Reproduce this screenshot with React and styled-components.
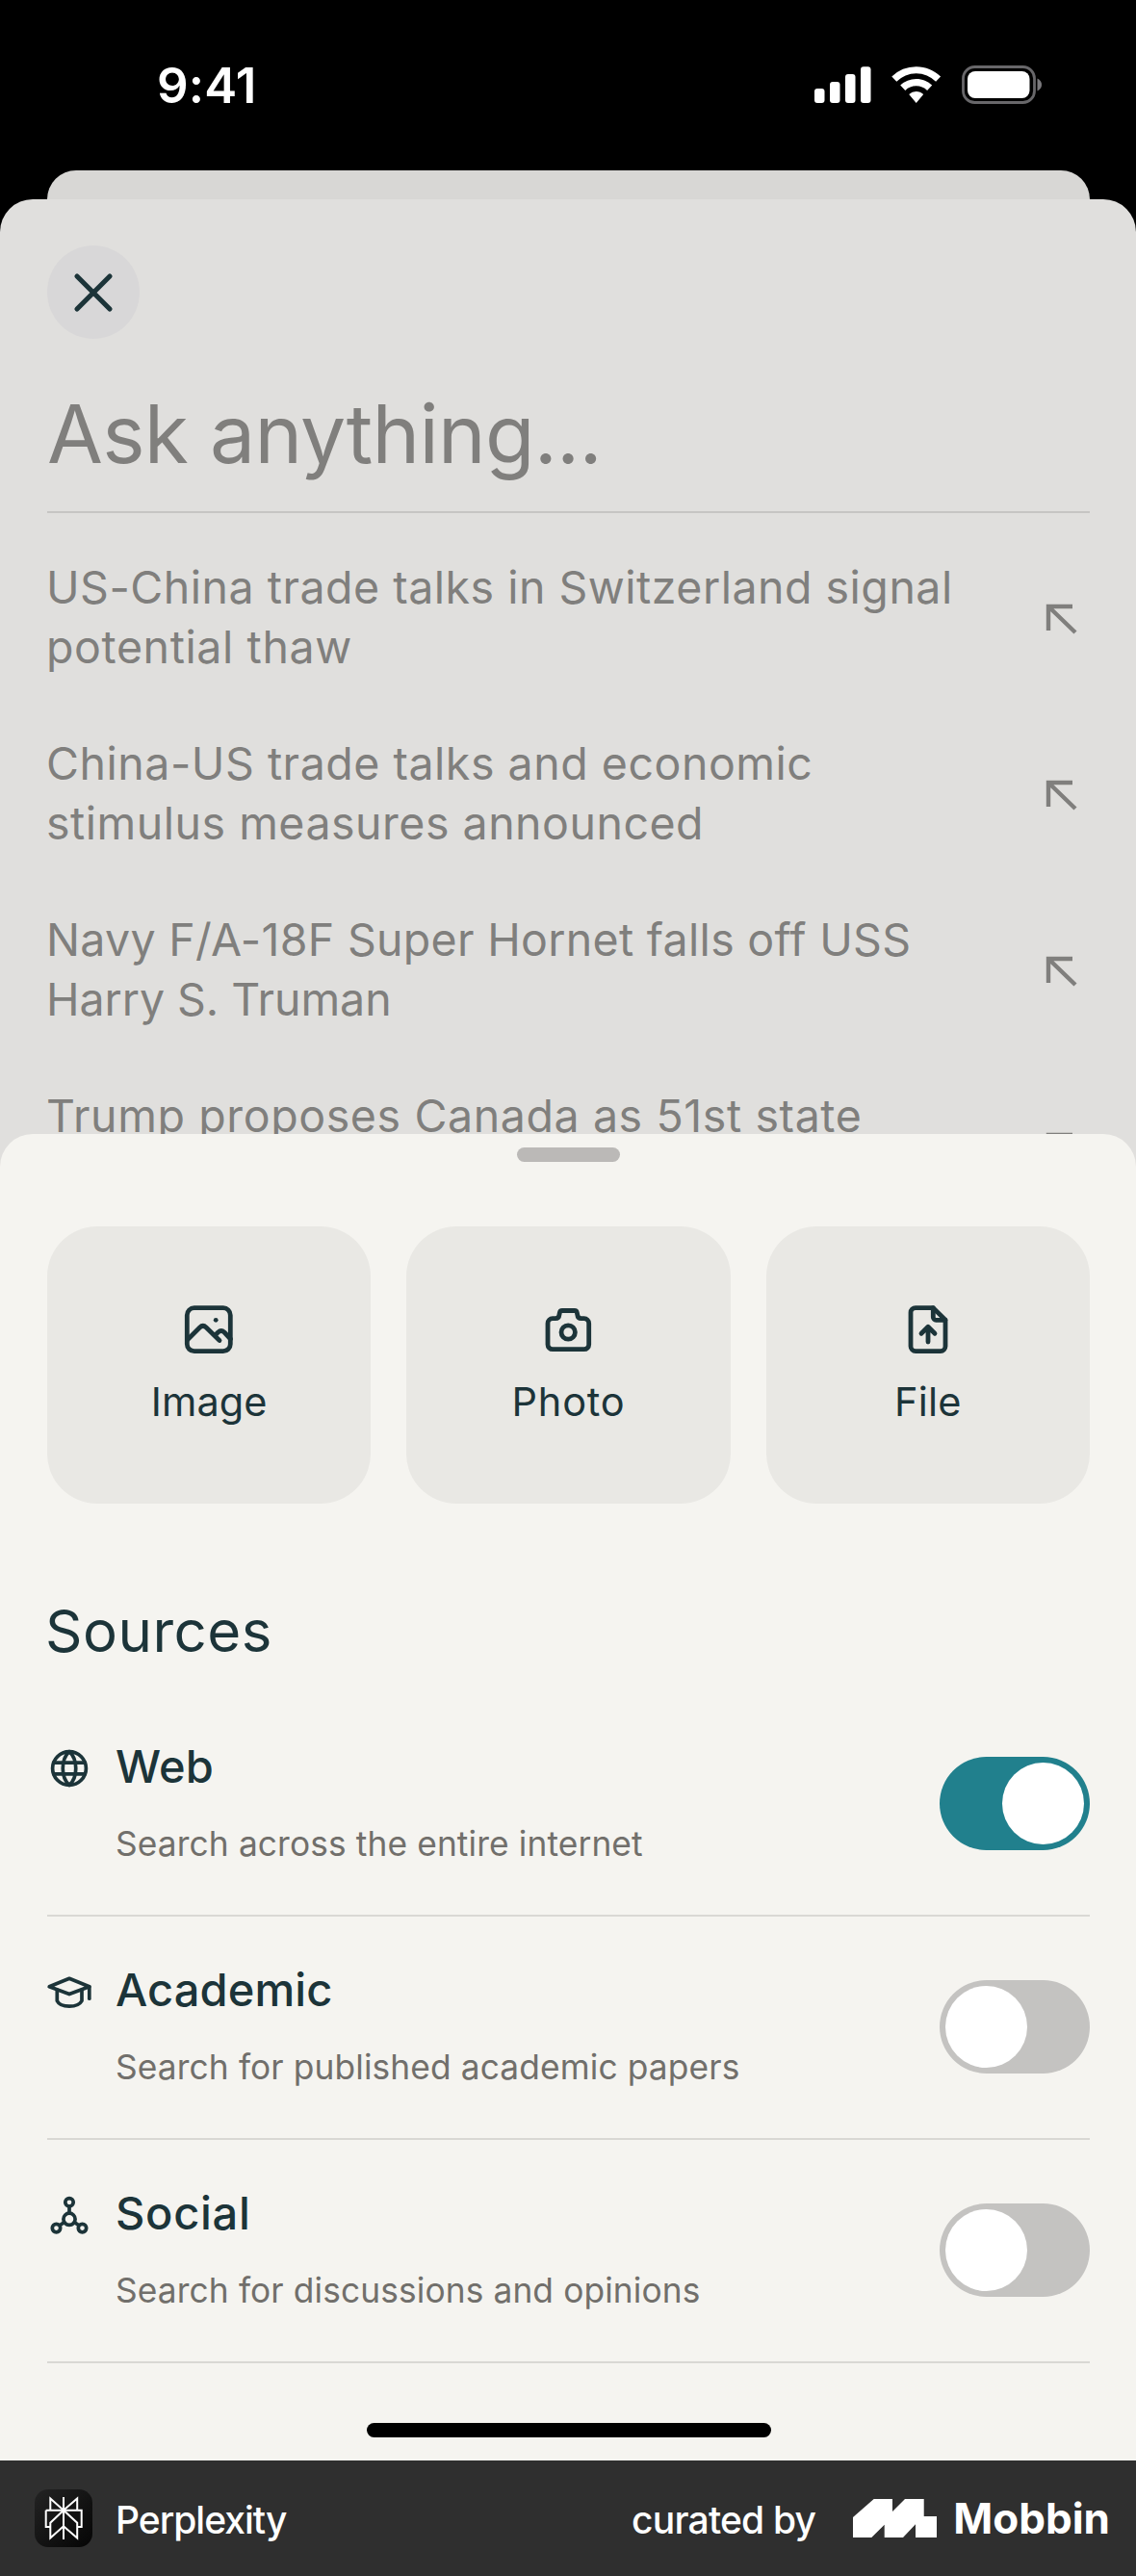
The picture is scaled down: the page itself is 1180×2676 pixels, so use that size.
import React, { useState } from "react";
import styled, { createGlobalStyle } from "styled-components";

const color = {
  ink: "#1c3439",
  paper: "#f5f4f0",
  dimmed: "#e0dfdd",
  dimmedText: "#807f7d",
  muted: "#716f6b",
  teal: "#21808d",
};

const GlobalStyle = createGlobalStyle`
  *, *::before, *::after { box-sizing: border-box; }
  body {
    margin: 0;
    background: #000;
    font-family: Inter, "Liberation Sans", sans-serif;
    -webkit-font-smoothing: antialiased;
  }
  button { font: inherit; border: 0; padding: 0; }
  h1, h2, h3, p, ul { margin: 0; padding: 0; font-weight: 400; }
`;

const Screen = styled.div`
  display: flex;
  flex-direction: column;
  width: 1180px;
  height: 2676px;
  background: #000;
  overflow: hidden;
`;

const StatusBar = styled.header`
  flex: none;
  display: flex;
  justify-content: space-between;
  height: 177px;
  padding: 58px 98px 0 163px;
`;

const Time = styled.span`
  color: #fff;
  font-size: 51px;
  line-height: 62px;
  font-weight: 600;
  letter-spacing: 0.2px;
`;

const StatusIcon = styled.svg`
  display: block;
  width: 238px;
  height: 44px;
  margin-top: 8px;
`;

const BackSheet = styled.div`
  flex: none;
  height: 30px;
  margin: 0 48px 0 49px;
  border-radius: 30px 30px 0 0;
  background: #d8d7d5;
`;

const AskSheet = styled.main`
  flex: none;
  display: flex;
  flex-direction: column;
  align-items: stretch;
  height: 1031px;
  padding: 48px 48px 0 49px;
  border-radius: 34px 34px 0 0;
  background: ${color.dimmed};
  overflow: hidden;
`;

const CloseButton = styled.button`
  flex: none;
  display: grid;
  place-items: center;
  width: 96px;
  height: 97px;
  border-radius: 50%;
  background: #d8d7d8;
  svg { display: block; }
`;

const Prompt = styled.h1`
  flex: none;
  margin-top: 49px;
  height: 132px;
  border-bottom: 2px solid #c6c5c3;
  color: ${color.dimmedText};
  font-size: 84px;
  line-height: 100px;
  letter-spacing: -0.75px;
  white-space: nowrap;
`;

const SuggestionList = styled.ul`
  flex: none;
  display: flex;
  flex-direction: column;
  gap: 59px;
  padding-top: 46px;
  list-style: none;
`;

const Suggestion = styled.li`
  display: flex;
  align-items: center;
  justify-content: space-between;
  height: 124px;
  padding-right: 12px;
  color: ${color.dimmedText};
  svg { margin-top: 3px; }
`;

const SuggestionText = styled.div`
  align-self: flex-start;
  margin-left: -1px;
`;

const SuggestionLine = styled.span`
  display: block;
  font-size: 46.5px;
  line-height: 62px;
  letter-spacing: ${(p) => p.$tracking}px;
  white-space: nowrap;
`;

const BottomSheet = styled.section`
  position: relative;
  flex: none;
  display: flex;
  flex-direction: column;
  height: 1378px;
  margin-top: -60px;
  padding: 14px 48px 0 49px;
  border-radius: 34px 34px 0 0;
  background: ${color.paper};
`;

const Handle = styled.div`
  flex: none;
  align-self: center;
  width: 107px;
  height: 15px;
  border-radius: 8px;
  background: #bbb9b7;
`;

const CardRow = styled.div`
  flex: none;
  display: grid;
  grid-template-columns: repeat(3, 1fr);
  gap: 37px;
  margin-top: 67px;
`;

const Card = styled.button`
  display: flex;
  flex-direction: column;
  align-items: center;
  gap: 22px;
  height: 288px;
  padding-top: 79px;
  border-radius: 52px;
  background: #e9e8e4;
  color: ${color.ink};
`;

const CardIcon = styled.svg`
  display: block;
  width: 56px;
  height: 56px;
  fill: none;
  stroke: currentColor;
  stroke-width: 4.8;
  stroke-linecap: round;
  stroke-linejoin: round;
`;

const CardLabel = styled.span`
  font-size: 41.5px;
  line-height: 50px;
  letter-spacing: ${(p) => p.$tracking}px;
`;

const SectionTitle = styled.h2`
  flex: none;
  margin-top: 97px;
  margin-left: -2px;
  color: ${color.ink};
  font-size: 60px;
  line-height: 70px;
  letter-spacing: 0.5px;
`;

const SourceList = styled.ul`
  flex: none;
  display: flex;
  flex-direction: column;
  margin-top: 30px;
  list-style: none;
`;

const SourceRow = styled.li`
  display: flex;
  align-items: flex-start;
  height: 232px;
  border-bottom: 2px solid #d9d8d4;
`;

const SourceIcon = styled.svg`
  flex: none;
  display: block;
  width: 48px;
  height: 48px;
  margin-top: 54px;
  margin-left: -1px;
  fill: none;
  stroke: ${color.ink};
  stroke-width: 3.7;
  stroke-linecap: round;
  stroke-linejoin: round;
`;

const SourceText = styled.div`
  flex: 1;
  display: flex;
  flex-direction: column;
  gap: 31px;
  padding: 48px 0 0 24px;
`;

const SourceName = styled.h3`
  color: ${color.ink};
  font-size: 47px;
  line-height: 56px;
  font-weight: 550;
  letter-spacing: ${(p) => p.$tracking}px;
`;

const SourceHint = styled.p`
  color: ${color.muted};
  font-size: 35.3px;
  line-height: 44px;
  letter-spacing: 0.12px;
`;

const Toggle = styled.button`
  flex: none;
  display: flex;
  align-items: center;
  justify-content: ${(p) => (p.$on ? "flex-end" : "flex-start")};
  width: 156px;
  height: 97px;
  margin-top: 66px;
  padding: 0 6px;
  border-radius: 49px;
  background: ${(p) => (p.$on ? color.teal : "#c4c3c1")};
`;

const Knob = styled.span`
  width: 85px;
  height: 85px;
  border-radius: 50%;
  background: #fff;
`;

const HomeIndicator = styled.div`
  flex: none;
  align-self: center;
  width: 420px;
  height: 15px;
  margin-top: 62px;
  border-radius: 8px;
  background: #000;
`;

const Footer = styled.footer`
  flex: none;
  display: flex;
  align-items: center;
  height: 120px;
  padding: 0 27px 0 36px;
  background: #2f2f2f;
  color: #fff;
`;

const AppTile = styled.div`
  display: grid;
  place-items: center;
  width: 60px;
  height: 60px;
  border-radius: 14px;
  background: linear-gradient(135deg, #232323, #050505);
`;

const FooterText = styled.span`
  margin-left: ${(p) => p.$before ?? 0}px;
  padding-top: 3px;
  font-size: 39px;
  line-height: 48px;
  font-weight: 550;
  letter-spacing: ${(p) => p.$tracking}px;
`;

const Credit = styled.div`
  display: flex;
  align-items: center;
  margin-left: auto;
`;

const MobbinMark = styled.svg`
  display: block;
  width: 87px;
  height: 40px;
  margin: 0 17px 0 39px;
`;

const MobbinName = styled.span`
  font-size: 44px;
  line-height: 52px;
  font-weight: 700;
`;

const suggestions = [
  { lines: [["US-China trade talks in Switzerland signal", 0.5], ["potential thaw", 0.6]] },
  { lines: [["China-US trade talks and economic", 0.52], ["stimulus measures announced", 0.5]] },
  { lines: [["Navy F/A-18F Super Hornet falls off USS", 0.3], ["Harry S. Truman", -0.05]] },
  { lines: [["Trump proposes Canada as 51st state", 0.6]] },
];

const ImageGlyph = () => (
  <CardIcon viewBox="0 0 56 56">
    <rect x="5.3" y="5.7" width="45" height="45" rx="7.5" />
    <path d="M6 38.5 18.5 26q3.3-3.3 6.7 0L39 39.5" />
    <path d="m34.5 34 3-3q3.3-3 6.5 0l6.5 7" />
    <circle cx="35.2" cy="18.3" r="2.4" fill="currentColor" stroke="none" />
  </CardIcon>
);

const CameraGlyph = () => (
  <CardIcon viewBox="0 0 56 56">
    <path d="M12 16.7h3q3.6 0 4-4.2l.3-1.7Q19.700 8.500 22 8.500h12.700q2.300 0 2.700 2.300l.3 1.700q.4 4.200 4 4.200h3a5 5 0 0 1 5 5v22a5 5 0 0 1-5 5H12a5 5 0 0 1-5-5v-22a5 5 0 0 1 5-5z" />
    <circle cx="28.2" cy="31" r="7.2" />
  </CardIcon>
);

const FileGlyph = () => (
  <CardIcon viewBox="0 0 56 56">
    <path d="M33.3 5.6H15a5 5 0 0 0-5 5v35a5 5 0 0 0 5 5h26a5 5 0 0 0 5-5V18.3z" />
    <path d="M33.3 5.6v9.7a3 3 0 0 0 3 3H46" />
    <path d="M28 41V25.5M21 32.2l7-7 7 7" />
  </CardIcon>
);

const GlobeGlyph = () => (
  <SourceIcon viewBox="0 0 48 48">
    <circle cx="24" cy="24" r="17.4" />
    <path d="M24 6.6c-9 8-9 26.8 0 34.8M24 6.6c9 8 9 26.8 0 34.8M7.8 18.2h32.4M7.8 29.8h32.4" />
  </SourceIcon>
);

const CapGlyph = () => (
  <SourceIcon viewBox="0 0 48 48">
    <path d="M3.2 18.8 24 10.3l20.8 8.5L24 26.6z" />
    <path d="M11.3 22v11.5Q14 39.2 24 39.2t13-5.700V22" />
    <path d="M44.8 18.8v12.4" />
  </SourceIcon>
);

const NetworkGlyph = () => (
  <SourceIcon viewBox="0 0 48 48">
    <circle cx="24" cy="10.8" r="4.2" />
    <circle cx="24" cy="28.3" r="6.1" />
    <circle cx="10.5" cy="37.6" r="4.2" />
    <circle cx="37.5" cy="37.6" r="4.2" />
    <path d="M24 15v7.2M18.7 31.6l-4.6 3.2M29.3 31.6l4.6 3.2" />
  </SourceIcon>
);

const cards = [
  { label: "Image", Glyph: ImageGlyph, tracking: 0.1 },
  { label: "Photo", Glyph: CameraGlyph, tracking: 0.8 },
  { label: "File", Glyph: FileGlyph, tracking: 0.2 },
];

const sources = [
  { name: "Web", hint: "Search across the entire internet", Glyph: GlobeGlyph, tracking: 0.2 },
  { name: "Academic", hint: "Search for published academic papers", Glyph: CapGlyph, tracking: 0.1 },
  { name: "Social", hint: "Search for discussions and opinions", Glyph: NetworkGlyph, tracking: 0.7 },
];

const StatusGlyphs = () => (
  <StatusIcon viewBox="0 0 238 44" fill="#fff">
    <rect x="2" y="26" width="10.5" height="15" rx="3" />
    <rect x="18" y="19" width="10.5" height="22" rx="3" />
    <rect x="34" y="11" width="10.5" height="30" rx="3" />
    <rect x="50" y="3.3" width="10.5" height="37.7" rx="3" />
    <path d="M107.7 3.3c9.8 0 18.7 3.8 25.4 10.2l-5 5.3a28.500 28.500 0 0 0-40.800 0l-5-5.300A37 37 0 0 1 107.700 3.300z" />
    <path d="M107.7 16c6.4 0 12.2 2.5 16.5 6.6l-5.1 5.3a16.500 16.500 0 0 0-22.800 0l-5.100-5.300A24 24 0 0 1 107.700 16z" />
    <path d="M107.7 29c2.8 0 5.5 1.1 7.5 2.9l-7.5 9.1-7.5-9.1A11 11 0 0 1 107.7 29z" />
    <rect x="156.5" y="3.5" width="74" height="37" rx="12" fill="none" stroke="#68676a" strokeWidth="2.8" />
    <rect x="161" y="8" width="64.5" height="28" rx="8" />
    <path d="M233.500 15.500c3 1.200 4.500 3.700 4.500 6.500s-1.500 5.300-4.500 6.500z" fill="#7a797c" />
  </StatusIcon>
);

export default function App() {
  const [active, setActive] = useState({ Web: true });

  return (
    <Screen>
      <GlobalStyle />
      <StatusBar>
        <Time>9:41</Time>
        <StatusGlyphs />
      </StatusBar>
      <BackSheet />
      <AskSheet>
        <CloseButton aria-label="Close">
          <svg width="44" height="44" viewBox="0 0 44 44" stroke={color.ink} strokeWidth="5.2" strokeLinecap="round">
            <path d="M5 5l34 34M39 5L5 39" />
          </svg>
        </CloseButton>
        <Prompt>Ask anything...</Prompt>
        <SuggestionList>
          {suggestions.map(({ lines }) => (
            <Suggestion key={lines[0][0]}>
              <SuggestionText>
                {lines.map(([line, tracking]) => (
                  <SuggestionLine key={line} $tracking={tracking}>{line}</SuggestionLine>
                ))}
              </SuggestionText>
              <svg width="34" height="32" viewBox="0 0 34 32" fill="none" stroke="currentColor" strokeWidth="4.4">
                <path d="M3 28V3h25M3 3l28 27" />
              </svg>
            </Suggestion>
          ))}
        </SuggestionList>
      </AskSheet>
      <BottomSheet>
        <Handle />
        <CardRow>
          {cards.map(({ label, Glyph, tracking }) => (
            <Card key={label}>
              <Glyph />
              <CardLabel $tracking={tracking}>{label}</CardLabel>
            </Card>
          ))}
        </CardRow>
        <SectionTitle>Sources</SectionTitle>
        <SourceList>
          {sources.map(({ name, hint, Glyph, tracking }) => (
            <SourceRow key={name}>
              <Glyph />
              <SourceText>
                <SourceName $tracking={tracking}>{name}</SourceName>
                <SourceHint>{hint}</SourceHint>
              </SourceText>
              <Toggle
                role="switch"
                aria-label={name}
                aria-checked={!!active[name]}
                $on={!!active[name]}
                onClick={() => setActive((s) => ({ ...s, [name]: !s[name] }))}
              >
                <Knob />
              </Toggle>
            </SourceRow>
          ))}
        </SourceList>
        <HomeIndicator />
      </BottomSheet>
      <Footer>
        <AppTile>
          <svg width="60" height="60" viewBox="0 0 60 60" fill="none" stroke="#fff" strokeWidth="2">
            <path d="M30 8v44M11.7 21.7h37V39h-4.5M11.7 21.7V39h4.5" />
            <path d="M16.3 21.7V9.5L30 21.7 44.2 9.5v12.2" />
            <path d="M30 21.7 16.3 34.7v15.8L30 38.3l14.2 12.2V34.7z" />
          </svg>
        </AppTile>
        <FooterText $before={24} $tracking={-1}>Perplexity</FooterText>
        <Credit>
          <FooterText $tracking={-0.8}>curated by</FooterText>
          <MobbinMark viewBox="0 0 87 40" fill="#fff">
            <path d="M0 19 21.7 0H41v13L54 0h19.7v18H87v22H65V26.3L52 40H32.7V26.7L19.3 40H0z" />
          </MobbinMark>
          <MobbinName>Mobbin</MobbinName>
        </Credit>
      </Footer>
    </Screen>
  );
}
